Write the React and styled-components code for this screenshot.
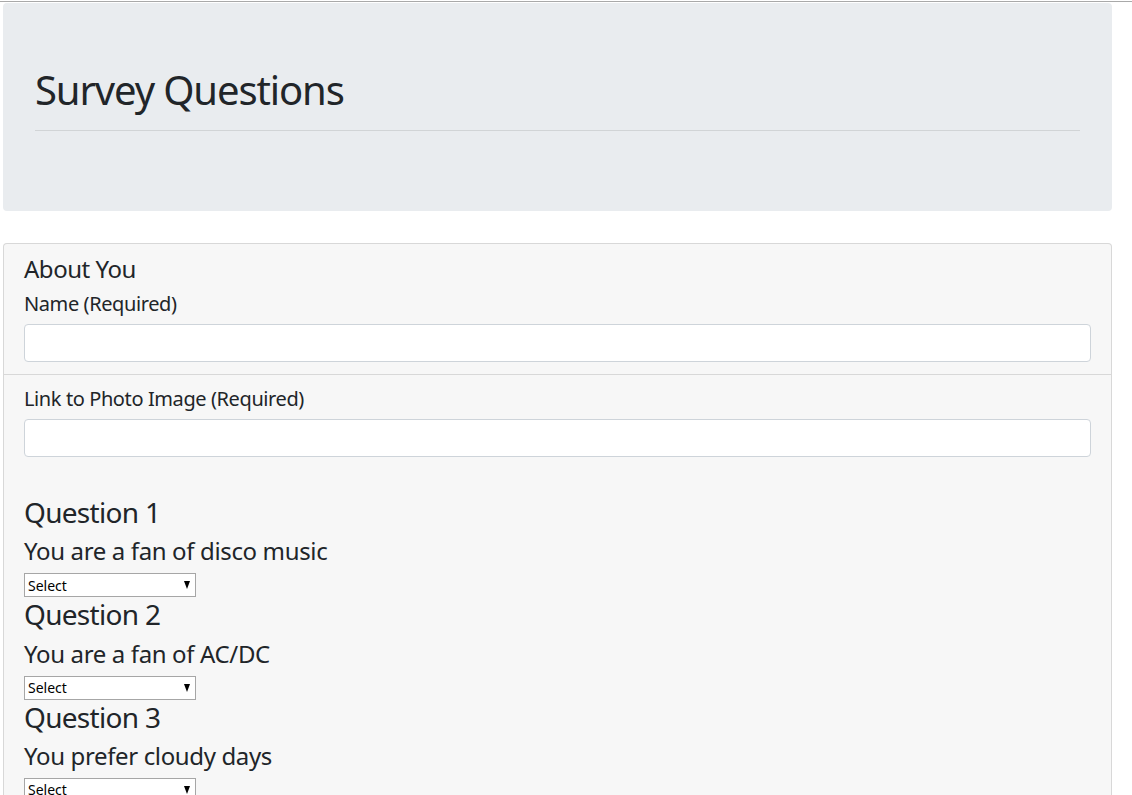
import React from 'react';
import styled, { createGlobalStyle } from 'styled-components';

const GlobalStyle = createGlobalStyle`
    body {
        margin: 0;
        background: #fff;
        font-family: "Noto Sans", "Open Sans", sans-serif;
        color: #212529;
    }
`;

const Page = styled.div`
    width: 1115px;
    padding: 1px 3px 0;
    box-sizing: border-box;
`;

const TopRule = styled.div`
    height: 1px;
    background: #a9a9a9;
    margin: 0 -3px 1px;
    width: 1132px;
`;

const Jumbotron = styled.div`
    background: #e9ecef;
    border-radius: 4px;
    padding: 63px 32px 64px;
    margin-bottom: 32px;
`;

const Title = styled.h1`
    margin: 0;
    font-size: 40px;
    font-weight: 400;
    line-height: 48px;
    letter-spacing: -0.028em;
`;

const Rule = styled.hr`
    margin: 16px 0;
    border: 0;
    border-top: 1px solid rgba(0, 0, 0, 0.1);
`;

const Card = styled.div`
    background: #f7f7f7;
    border: 1px solid rgba(0, 0, 0, 0.125);
    border-radius: 4px;
`;

const Section = styled.div`
    padding: ${(p) => (p.divided ? '11px' : '12px')} 20px 12px;
    border-bottom: ${(p) => (p.divided ? '1px solid rgba(0, 0, 0, 0.125)' : 'none')};
`;

const SectionTitle = styled.h4`
    margin: 0 0 8px;
    font-size: 24px;
    font-weight: 400;
    line-height: 28.8px;
    letter-spacing: -0.02em;
`;

const Label = styled.h5`
    margin: 0 0 8px;
    font-size: 20px;
    font-weight: 400;
    line-height: 24px;
    letter-spacing: -0.02em;
`;

const TextInput = styled.input`
    display: block;
    width: 100%;
    height: 38px;
    box-sizing: border-box;
    border: 1px solid #ced4da;
    border-radius: 4px;
    background: #fff;
    padding: 6px 12px;
    font-size: 16px;
    font-family: inherit;
`;

const Questions = styled.div`
    margin-top: 39px;
`;

const QuestionTitle = styled.h3`
    margin: 0 0 8px;
    font-size: 28px;
    font-weight: 400;
    line-height: 33.6px;
    letter-spacing: -0.025em;
`;

const Statement = styled.h4`
    margin: 0 0 7px;
    font-size: 24px;
    font-weight: 400;
    line-height: 28.8px;
    letter-spacing: -0.015em;
`;

const SelectWrap = styled.div`
    position: relative;
    width: 172px;
    height: 24px;
    margin-bottom: 1px;
`;

const Select = styled.select`
    appearance: none;
    -webkit-appearance: none;
    width: 100%;
    height: 100%;
    box-sizing: border-box;
    border: 1px solid #a6a6a6;
    border-radius: 0;
    background: #fff;
    padding: 0 20px 0 3px;
    font-family: inherit;
    font-size: 14px;
    color: #000;
`;

const Arrow = styled.span`
    position: absolute;
    right: 6px;
    top: 8px;
    width: 0;
    height: 0;
    border-left: 3.5px solid transparent;
    border-right: 3.5px solid transparent;
    border-top: 8px solid #000;
    pointer-events: none;
`;

const questions = [
    'You are a fan of disco music',
    'You are a fan of AC/DC',
    'You prefer cloudy days',
    'You like spicy food',
    'You enjoy long walks',
];

const options = ['Select', '1 (Strongly Disagree)', '2', '3', '4', '5 (Strongly Agree)'];

export default function App() {
    return (
        <Page>
            <GlobalStyle />
            <TopRule />
            <Jumbotron>
                <Title>Survey Questions</Title>
                <Rule />
            </Jumbotron>
            <Card>
                <Section divided>
                    <SectionTitle>About You</SectionTitle>
                    <Label>Name (Required)</Label>
                    <TextInput type="text" />
                </Section>
                <Section>
                    <Label>Link to Photo Image (Required)</Label>
                    <TextInput type="text" />
                    <Questions>
                        {questions.map((q, i) => (
                            <div key={i}>
                                <QuestionTitle>Question {i + 1}</QuestionTitle>
                                <Statement>{q}</Statement>
                                <SelectWrap>
                                    <Select defaultValue="Select">
                                        {options.map((o) => (
                                            <option key={o}>{o}</option>
                                        ))}
                                    </Select>
                                    <Arrow />
                                </SelectWrap>
                            </div>
                        ))}
                    </Questions>
                </Section>
            </Card>
        </Page>
    );
}
